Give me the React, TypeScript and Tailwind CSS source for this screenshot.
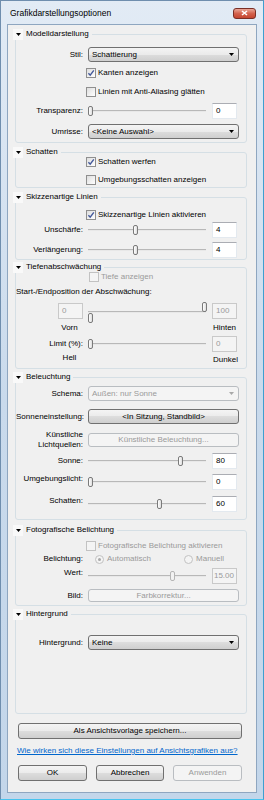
import React from "react";

type Kids = { children?: React.ReactNode };

const btnFace =
  "rounded-[3px] border border-[#707070] bg-[linear-gradient(#f4f4f4,#ebebeb_50%,#dddddd_50%,#cfcfcf)]";
const btnOff = "rounded-[3px] border border-[#b9bdc1] bg-[#f4f4f4] text-[#9a9a9a]";

function Triangle({ color = "#000" }: { color?: string }) {
  return (
    <svg width="5" height="3" viewBox="0 0 5 3">
      <path d="M0 0h5L2.5 3z" fill={color} />
    </svg>
  );
}

function Section({ title, className = "", children }: { title: string; className?: string } & Kids) {
  return (
    <fieldset className={`rounded-[3px] border border-[#d5dfe5] ${className}`}>
      <legend className="-ml-[3px] pr-[3px]">
        <div className="flex h-[10px] items-center">
          <span className="flex h-[11px] w-[10px] items-center justify-center bg-[#f9f9f9]">
            <Triangle />
          </span>
          <span className="ml-[3px]">{title}</span>
        </div>
      </legend>
      {children}
    </fieldset>
  );
}

function Row({
  label,
  className = "",
  top = false,
  children,
}: { label: React.ReactNode; className?: string; top?: boolean } & Kids) {
  return (
    <div className={`flex ${className}`}>
      <div className={`w-[67px] shrink-0 text-right ${top ? "self-start" : "self-center"}`}>{label}</div>
      <div className="ml-[5px] flex w-[151px] items-center">{children}</div>
    </div>
  );
}

function Check({ label, checked = false, disabled = false }: { label: string; checked?: boolean; disabled?: boolean }) {
  return (
    <div className={`flex h-[10px] items-center ${disabled ? "text-[#9a9a9a]" : ""}`}>
      <span
        className={`flex h-[10px] w-[10px] items-center justify-center border ${
          disabled ? "border-[#c2c2c2] bg-[#f4f4f4]" : "border-[#8f8f8f] bg-linear-to-br from-[#dedede] to-white"
        }`}
      >
        {checked && (
          <svg width="8" height="8" viewBox="0 0 8 8">
            <path d="M1.4 4.3 3.2 6.2 6.8 1.4" stroke="#43589a" strokeWidth="1.4" fill="none" />
          </svg>
        )}
      </span>
      <span className="ml-[2px]">{label}</span>
    </div>
  );
}

function Radio({ label, checked = false }: { label: string; checked?: boolean }) {
  return (
    <div className="flex h-[10px] items-center text-[#9a9a9a]">
      <span className="flex h-[9px] w-[9px] items-center justify-center rounded-full border border-[#c2c2c2] bg-[#f4f4f4]">
        {checked && <span className="h-[3px] w-[3px] rounded-full bg-[#a8a8a8]" />}
      </span>
      <span className="ml-[3px]">{label}</span>
    </div>
  );
}

function Select({ value, disabled = false }: { value: string; disabled?: boolean }) {
  return (
    <div
      className={`flex h-[15px] w-full items-center justify-between pl-[3px] pr-[4px] ${
        disabled ? btnOff : btnFace
      }`}
    >
      <span>{value}</span>
      <Triangle color={disabled ? "#a8a8a8" : "#000"} />
    </div>
  );
}

function Button({
  label,
  disabled = false,
  className = "",
}: { label: string; disabled?: boolean; className?: string }) {
  return (
    <div className={`flex items-center justify-center ${disabled ? btnOff : btnFace} ${className}`}>{label}</div>
  );
}

function Field({ value, disabled = false, right = false }: { value: string; disabled?: boolean; right?: boolean }) {
  return (
    <div
      className={`h-[16px] w-[25px] shrink-0 border leading-[14px] ${right ? "pr-[2px] text-right" : "pl-[3px]"} ${
        disabled
          ? "border-[#c9c9c9] bg-[#f4f4f4] text-[#9a9a9a]"
          : "border-[#e3e9ef] border-t-[#abadb3] bg-white"
      }`}
    >
      {value}
    </div>
  );
}

function Thumb({ left, top, disabled = false }: { left: number; top: number; disabled?: boolean }) {
  return (
    <div
      className={`absolute h-[10px] w-[5px] rounded-[2px] border ${
        disabled ? "border-[#b5b5b5] bg-[#f2f2f2]" : "border-[#7a7a7a] bg-linear-to-r from-white to-[#dedede]"
      }`}
      style={{ left, top }}
    />
  );
}

function Slider({ pos, disabled = false }: { pos: number; disabled?: boolean }) {
  return (
    <div className="relative h-[16px] w-[119px] shrink-0">
      <div className="absolute left-0 right-[1px] top-[7px] h-[2px] border-t border-[#b8b8b8] bg-[#e8e8e8]" />
      <Thumb left={pos} top={3} disabled={disabled} />
    </div>
  );
}

function SliderField({
  pos,
  value,
  disabled = false,
  fieldOff = false,
}: { pos: number; value: string; disabled?: boolean; fieldOff?: boolean }) {
  return (
    <>
      <Slider pos={pos} disabled={disabled} />
      <div className="ml-[5px]">
        <Field value={value} disabled={disabled || fieldOff} right={disabled} />
      </div>
    </>
  );
}

export default function App() {
  return (
    <div className="flex h-[800px] w-[264px] flex-col border border-[#6f8eae] border-r-[#3d9fd0] border-b-[#48c3ee] bg-linear-to-b from-[#e2ebf5] via-[#c9daec] to-[#c3d6ea] font-['Liberation_Sans','Arial',sans-serif] text-[8px] leading-[10px] text-black">
      {/* Titelleiste */}
      <div className="flex h-[23px] shrink-0 items-center justify-between pl-[9px] pr-[7px] pt-[1px]">
        <span className="text-[8.5px]">Grafikdarstellungsoptionen</span>
        <div className="flex h-[11px] w-[23px] items-center justify-center rounded-[3px] border border-[#7a2f25] bg-linear-to-b from-[#e9a697] via-[#d3624d] to-[#c4452f]">
          <svg width="7" height="6" viewBox="0 0 7 6">
            <path d="M1 1l5 4M6 1 1 5" stroke="#fff" strokeWidth="1.6" />
          </svg>
        </div>
      </div>

      {/* Client */}
      <div className="mx-[6px] mb-[6px] flex flex-1 flex-col border border-[#8ea6c0] bg-[#f0f0f0]">
        <div className="ml-[7px] mr-[9px] flex flex-col">
          <Section title="Modelldarstellung" className="mt-[4px] pb-[3px]">
            <Row label="Stil:" className="mt-[8px]">
              <Select value="Schattierung" />
            </Row>
            <div className="mt-[6px] pl-[70px]">
              <Check label="Kanten anzeigen" checked />
            </div>
            <div className="mt-[9px] pl-[70px]">
              <Check label="Linien mit Anti-Aliasing glätten" />
            </div>
            <Row label="Transparenz:" className="mt-[6px]">
              <SliderField pos={0} value="0" />
            </Row>
            <Row label="Umrisse:" className="mt-[5px]">
              <Select value="<Keine Auswahl>" />
            </Row>
          </Section>

          <Section title="Schatten" className="mt-[4px] pb-[2px]">
            <div className="pl-[70px]">
              <Check label="Schatten werfen" checked />
            </div>
            <div className="mt-[8px] pl-[70px]">
              <Check label="Umgebungsschatten anzeigen" />
            </div>
          </Section>

          <Section title="Skizzenartige Linien" className="mt-[4px] pb-[1px]">
            <div className="mt-[8px] pl-[70px]">
              <Check label="Skizzenartige Linien aktivieren" checked />
            </div>
            <Row label="Unschärfe:" className="mt-[2px]">
              <SliderField pos={45} value="4" />
            </Row>
            <Row label="Verlängerung:" className="mt-[4px]">
              <SliderField pos={45} value="4" />
            </Row>
          </Section>

          <Section title="Tiefenabschwächung" className="mt-[2px] pb-[3px]">
            <div className="pl-[73px]">
              <Check label="Tiefe anzeigen" disabled />
            </div>
            <div className="mt-[5px]">Start-/Endposition der Abschwächung:</div>
            <div className="mt-[6px] flex">
              <div className="flex w-[67px] justify-end">
                <Field value="0" disabled />
              </div>
              <div className="relative ml-[5px] h-[16px] w-[119px]">
                <div className="absolute left-0 right-[1px] top-[8px] h-[2px] border-t border-[#b8b8b8] bg-[#e8e8e8]" />
                <Thumb left={114} top={-1} />
                <Thumb left={0} top={10} />
              </div>
              <div className="ml-[5px]">
                <Field value="100" disabled />
              </div>
            </div>
            <div className="mt-[4px] flex h-[10px]">
              <div className="flex w-[67px] justify-end">
                <div className="w-[27px] text-center">Vorn</div>
              </div>
              <div className="ml-[129px] w-[25px] text-center">Hinten</div>
            </div>
            <Row label="Limit (%):" className="mt-[3px]">
              <SliderField pos={0} value="0" fieldOff />
            </Row>
            <div className="mt-[1px] flex h-[12px]">
              <div className="flex w-[67px] justify-end">
                <div className="w-[27px] text-center">Hell</div>
              </div>
              <div className="ml-[129px] mt-[2px] w-[27px] text-center">Dunkel</div>
            </div>
          </Section>

          <Section title="Beleuchtung" className="mt-[3px] pb-[7px]">
            <Row label="Schema:" className="mt-[4px]">
              <Select value="Außen: nur Sonne" disabled />
            </Row>
            <Row label="Sonneneinstellung:" className="mt-[8px]">
              <Button label="<In Sitzung, Standbild>" className="h-[15px] w-full" />
            </Row>
            <Row
              label={
                <>
                  Künstliche
                  <br />
                  Lichtquellen:
                </>
              }
              className="mt-[6px]"
            >
              <Button label="Künstliche Beleuchtung..." disabled className="h-[14px] w-full" />
            </Row>
            <Row label="Sonne:" className="mt-[3px]">
              <SliderField pos={90} value="80" />
            </Row>
            <Row label="Umgebungslicht:" className="mt-[5px]" top>
              <SliderField pos={0} value="0" />
            </Row>
            <Row label="Schatten:" className="mt-[6px]" top>
              <SliderField pos={69} value="60" />
            </Row>
          </Section>

          <Section title="Fotografische Belichtung" className="mt-[5px] pb-[3px]">
            <div className="mt-[6px] pl-[70px]">
              <Check label="Fotografische Belichtung aktivieren" disabled />
            </div>
            <Row label="Belichtung:" className="mt-[3px]">
              <div className="ml-[7px] flex">
                <Radio label="Automatisch" checked />
                <div className="ml-[33px]">
                  <Radio label="Manuell" />
                </div>
              </div>
            </Row>
            <Row label="Wert:" className="mt-[4px]" top>
              <SliderField pos={82} value="15.00" disabled />
            </Row>
            <Row label="Bild:" className="mt-[5px]">
              <Button label="Farbkorrektur..." disabled className="h-[13px] w-full" />
            </Row>
          </Section>

          <Section title="Hintergrund" className="mt-[3px] pb-[63px]">
            <Row label="Hintergrund:" className="mt-[16px]">
              <Select value="Keine" />
            </Row>
          </Section>
        </div>

        <Button label="Als Ansichtsvorlage speichern..." className="ml-[10px] mt-[9px] h-[16px] w-[224px]" />
        <div className="ml-[9px] mt-[7px] text-[#0066cc] underline">
          Wie wirken sich diese Einstellungen auf Ansichtsgrafiken aus?
        </div>
        <div className="ml-[10px] mt-[9px] flex gap-[9px]">
          <Button label="OK" className="h-[16px] w-[69px]" />
          <Button label="Abbrechen" className="h-[16px] w-[68px]" />
          <Button label="Anwenden" disabled className="h-[16px] w-[69px]" />
        </div>
      </div>
    </div>
  );
}
